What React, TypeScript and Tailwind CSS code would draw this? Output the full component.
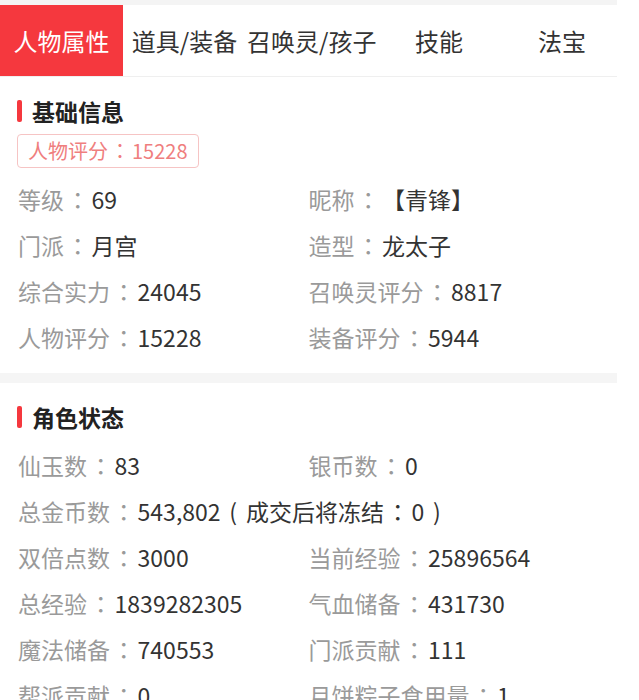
import React from "react";

type Item = { label: string; value: React.ReactNode; full?: boolean };

// punctuation centred in a box, as the phone font draws it
const P = ({ c, w = "w-[1.2em]" }: { c: string; w?: string }) => (
  <span
    className={"inline-block text-center " + w}
    style={{ fontFamily: '"Noto Sans CJK TC", sans-serif' }}
  >
    {c}
  </span>
);

const basicInfo: Item[] = [
  { label: "等级", value: "69" },
  { label: "昵称", value: "【青锋】" },
  { label: "门派", value: "月宫" },
  { label: "造型", value: "龙太子" },
  { label: "综合实力", value: "24045" },
  { label: "召唤灵评分", value: "8817" },
  { label: "人物评分", value: "15228" },
  { label: "装备评分", value: "5944" },
];

const roleStatus: Item[] = [
  { label: "仙玉数", value: "83" },
  { label: "银币数", value: "0" },
  {
    label: "总金币数",
    value: (
      <>
        543,802
        <P c="(" w="w-[1.1em]" />
        成交后将冻结
        <P c="：" />
        0
        <P c=")" w="w-[1.1em]" />
      </>
    ),
    full: true,
  },
  { label: "双倍点数", value: "3000" },
  { label: "当前经验", value: "25896564" },
  { label: "总经验", value: "1839282305" },
  { label: "气血储备", value: "431730" },
  { label: "魔法储备", value: "740553" },
  { label: "门派贡献", value: "111" },
  { label: "帮派贡献", value: "0" },
  { label: "月饼粽子食用量", value: "1" },
];

const tabs = ["人物属性", "道具/装备", "召唤灵/孩子", "技能", "法宝"];

const SectionTitle = ({ title }: { title: string }) => (
  <div className="flex items-center h-[32px]">
    <span className="w-[5px] h-[22px] rounded-[2px] bg-[#f5383e] mr-[10px]" />
    <span className="text-[23px] font-bold text-[#222]">{title}</span>
  </div>
);

const InfoGrid = ({ items, className }: { items: Item[]; className?: string }) => (
  <div className={"grid grid-cols-2 " + (className ?? "")}>
    {items.map((item, i) => (
      <div
        key={i}
        className={
          "h-[46px] leading-[46px] text-[23px] whitespace-nowrap " +
          (item.full ? "col-span-2" : "")
        }
      >
        <span className="text-[#9a9a9a]">
          {item.label}
          <P c="：" />
        </span>
        <span className="text-[#333]">{item.value}</span>
      </div>
    ))}
  </div>
);

export default function App() {
  return (
    <div
      className="w-[617px] bg-white overflow-hidden"
      style={{ fontFamily: '"Noto Sans CJK SC", "Noto Sans", sans-serif' }}
    >
      <div className="h-[5px] bg-[#f4f4f4]" />

      <div className="flex h-[72px] border-b border-[#efefef] overflow-hidden">
        {tabs.map((tab, i) => (
          <div
            key={tab}
            className={
              "shrink-0 min-w-[123px] px-[1px] flex items-center justify-center whitespace-nowrap text-[24px] " +
              (i === 0 ? "bg-[#f5383e] text-white" : "text-[#333]")
            }
          >
            {tab}
          </div>
        ))}
      </div>

      {/* 基础信息 */}
      <div className="pl-[17px] pr-[18px] pt-[18px] pb-[13px]">
        <SectionTitle title="基础信息" />
        <div className="mt-[7px] inline-flex items-center h-[34px] px-[10px] border border-[#f6c4c4] rounded-[4px] text-[20px] text-[#ef7e7e]">
          人物评分
          <P c="：" />
          15228
        </div>
        <InfoGrid items={basicInfo} className="mt-[8px] pl-[1px]" />
      </div>

      <div className="h-[10px] bg-[#f5f5f5]" />

      {/* 角色状态 */}
      <div className="pl-[17px] pr-[18px] pt-[18px] pb-[13px]">
        <SectionTitle title="角色状态" />
        <InfoGrid items={roleStatus} className="mt-[9px] pl-[1px]" />
      </div>
    </div>
  );
}
